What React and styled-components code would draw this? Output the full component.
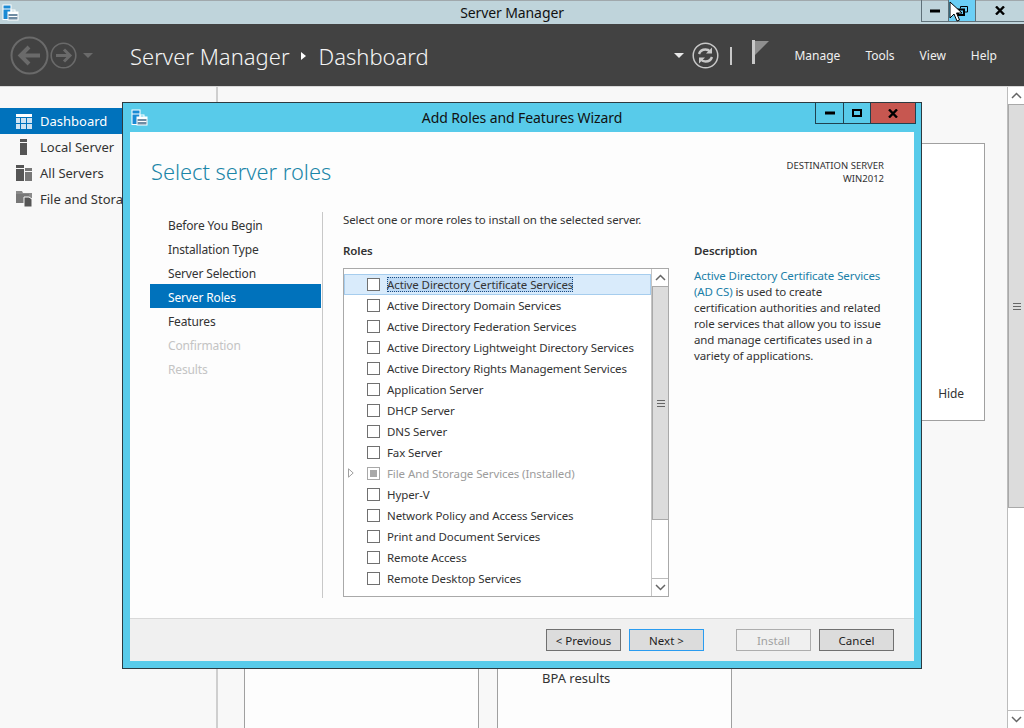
import React from 'react'
import styled, { createGlobalStyle } from 'styled-components'

const UI_FONT = `"Noto Sans", "Open Sans", "Liberation Sans", sans-serif`

const GlobalStyle = createGlobalStyle`
  html, body {
    margin: 0;
    padding: 0;
    height: 100%;
    overflow: hidden;
  }
  body {
    font-family: ${UI_FONT};
    font-size: 12px;
    color: #333;
  }
`

const ROLES = [
  { name: 'Active Directory Certificate Services', selected: true },
  { name: 'Active Directory Domain Services' },
  { name: 'Active Directory Federation Services' },
  { name: 'Active Directory Lightweight Directory Services' },
  { name: 'Active Directory Rights Management Services' },
  { name: 'Application Server' },
  { name: 'DHCP Server' },
  { name: 'DNS Server' },
  { name: 'Fax Server' },
  { name: 'File And Storage Services (Installed)', installed: true },
  { name: 'Hyper-V' },
  { name: 'Network Policy and Access Services' },
  { name: 'Print and Document Services' },
  { name: 'Remote Access' },
  { name: 'Remote Desktop Services' },
]

const STEPS = [
  { name: 'Before You Begin' },
  { name: 'Installation Type' },
  { name: 'Server Selection' },
  { name: 'Server Roles', active: true },
  { name: 'Features' },
  { name: 'Confirmation', disabled: true },
  { name: 'Results', disabled: true },
]

const ServerManagerIcon = () => (
  <svg width="17" height="17" viewBox="0 0 17 17">
    <rect x="0.5" y="0.5" width="9" height="15.5" fill="#fff" />
    <rect x="1.5" y="1.5" width="7" height="3" fill="#1a8ad4" />
    <rect x="1.5" y="5.5" width="7" height="9.5" fill="#1a8ad4" />
    <rect x="5.5" y="7.5" width="11" height="9" fill="#fff" />
    <rect x="6.5" y="10" width="9" height="5.5" fill="#6f8ca3" />
    <rect x="6.5" y="12" width="9" height="1" fill="#fff" />
    <rect x="9" y="6" width="4" height="2.5" fill="none" stroke="#fff" strokeWidth="1" />
  </svg>
)

const DashboardIcon = () => (
  <svg width="16" height="15" viewBox="0 0 16 15">
    <rect x="0" y="0" width="16" height="3" fill="#fff" />
    <rect x="0" y="4" width="4" height="5" fill="#cfe3f2" />
    <rect x="5" y="4" width="5" height="5" fill="#cfe3f2" />
    <rect x="11" y="4" width="5" height="5" fill="#cfe3f2" />
    <rect x="0" y="10" width="4" height="5" fill="#cfe3f2" />
    <rect x="5" y="10" width="5" height="5" fill="#cfe3f2" />
    <rect x="11" y="10" width="5" height="5" fill="#cfe3f2" />
  </svg>
)

const LocalServerIcon = () => (
  <svg width="16" height="16" viewBox="0 0 16 16">
    <rect x="4" y="0" width="7" height="3" fill="#555" />
    <rect x="4" y="4" width="7" height="12" fill="#555" />
  </svg>
)

const AllServersIcon = () => (
  <svg width="16" height="16" viewBox="0 0 16 16">
    <rect x="0" y="0" width="8" height="3" fill="#555" />
    <rect x="0" y="4" width="8" height="12" fill="#555" />
    <rect x="9" y="3" width="7" height="3" fill="#777" />
    <rect x="9" y="7" width="7" height="9" fill="#777" />
  </svg>
)

const FileStorageIcon = () => (
  <svg width="16" height="16" viewBox="0 0 16 16">
    <path d="M0 0h6l1 2h9v5H0z" fill="#8a8a8a" />
    <rect x="0" y="3" width="13" height="9" fill="#777" />
    <path d="M8 6h5l3 2v8H8z" fill="#555" stroke="#f8f8f8" strokeWidth="1" />
  </svg>
)

const BackIcon = () => (
  <svg width="39" height="39" viewBox="0 0 39 39">
    <circle cx="19.5" cy="19.5" r="18" fill="none" stroke="#6a6a6a" strokeWidth="2" />
    <path d="M30 19.5H11M19 11l-8.5 8.5L19 28" fill="none" stroke="#6a6a6a" strokeWidth="4" />
  </svg>
)

const ForwardIcon = () => (
  <svg width="27" height="27" viewBox="0 0 27 27">
    <circle cx="13.5" cy="13.5" r="12.3" fill="none" stroke="#6a6a6a" strokeWidth="1.6" />
    <path d="M6 13.5h14M14 7.5l6 6-6 6" fill="none" stroke="#6a6a6a" strokeWidth="3" />
  </svg>
)

const RefreshIcon = () => (
  <svg width="27" height="27" viewBox="0 0 27 27">
    <circle cx="13.5" cy="13.5" r="12.3" fill="none" stroke="#c8c8c8" strokeWidth="1.5" />
    <path d="M7 12c1-3 3.5-4.5 6.5-4.5 2 0 3.5.8 4.5 2" fill="none" stroke="#c8c8c8" strokeWidth="2.4" />
    <path d="M20 5.500v6h-6z" fill="#c8c8c8" />
    <path d="M20 15c-1 3-3.5 4.500-6.500 4.500-2 0-3.500-.8-4.500-2" fill="none" stroke="#c8c8c8" strokeWidth="2.4" />
    <path d="M7 21.500v-6h6z" fill="#c8c8c8" />
  </svg>
)

const FlagIcon = () => (
  <svg width="17" height="24" viewBox="0 0 17 24">
    <rect x="0" y="0" width="3" height="24" fill="#c8c8c8" />
    <path d="M3 1h14L3 15z" fill="#8f8f8f" />
  </svg>
)

const Chevron = ({ up }) => (
  <svg width="11" height="7" viewBox="0 0 11 7">
    <path d={up ? 'M1 6l4.500-4.500L10 6' : 'M1 1l4.500 4.500L10 1'} fill="none" stroke="#666" strokeWidth="1.5" />
  </svg>
)

const MinIcon = () => (
  <svg width="10" height="4" viewBox="0 0 10 4"><rect y="0.5" width="10" height="3" fill="#000" /></svg>
)

const MaxIcon = () => (
  <svg width="10" height="8" viewBox="0 0 10 8"><rect x="1" y="1" width="8" height="6" fill="none" stroke="#000" strokeWidth="2" /></svg>
)

const RestoreIcon = () => (
  <svg width="11" height="10" viewBox="0 0 11 10">
    <path d="M3.500 2.500V.5h7v5.500H8" fill="none" stroke="#000" strokeWidth="1" />
    <rect x="1" y="3.500" width="6" height="5.500" fill="none" stroke="#000" strokeWidth="2" />
  </svg>
)

const CloseIcon = () => (
  <svg width="10" height="9" viewBox="0 0 10 9">
    <path d="M1 .5l8 8M9 .5l-8 8" fill="none" stroke="#000" strokeWidth="2.400" />
  </svg>
)

const CursorIcon = () => (
  <svg width="14" height="22" viewBox="0 0 14 22">
    <path d="M1 1v16l4-4 3 7 2.500-1-3-7h5.500z" fill="#fff" stroke="#000" strokeWidth="1" />
  </svg>
)

const ExpanderIcon = () => (
  <svg width="6" height="10" viewBox="0 0 6 10">
    <path d="M.5.8L5.200 5 .5 9.200z" fill="#fff" stroke="#a0a0a0" strokeWidth="1" />
  </svg>
)

const Page = styled.div`
  width: 1024px;
  height: 728px;
  position: relative;
  overflow: hidden;
  background: #f8f8f8;
  display: flex;
  flex-direction: column;
`

const TitleBar = styled.div`
  height: 23px;
  flex: none;
  position: relative;
  box-sizing: content-box;
  background: #bfd4db;
  border-top: 1px solid #a0a8ac;
  display: flex;
  align-items: center;
  justify-content: center;
  font-size: 14px;
  letter-spacing: -0.1px;
  line-height: 21px;
  color: #111;
`

const TitleIcon = styled.span`
  position: absolute;
  left: 2px;
  top: 3px;
  display: flex;
`

const MainControls = styled.div`
  position: absolute;
  right: 0;
  top: -1px;
  height: 21px;
  display: flex;
  border-bottom: 1px solid #5f7078;
  border-left: 1px solid #5f7078;
`

const MainControl = styled.div`
  width: ${p => p.$w}px;
  display: flex;
  align-items: center;
  justify-content: center;
  background: ${p => (p.$hover ? '#6bcff6' : 'transparent')};
  border-left: ${p => (p.$first ? 'none' : '1px solid #5f7078')};
`

const Header = styled.header`
  height: 63px;
  flex: none;
  background: #424242;
  border-bottom: 1px solid #d8d8d8;
  box-sizing: border-box;
  display: flex;
  align-items: center;
  padding: 1px 27px 0 10px;
  color: #fff;
`

const NavButtons = styled.div`
  display: flex;
  align-items: center;
  gap: 1px;
  width: 120px;
`

const Caret = styled.span`
  width: 0;
  height: 0;
  border-left: 5px solid transparent;
  border-right: 5px solid transparent;
  border-top: 5px solid ${p => p.$color};
  margin-left: ${p => p.$left || 0}px;
  margin-right: ${p => p.$right || 0}px;
`

const Breadcrumb = styled.div`
  display: flex;
  align-items: center;
  font-size: 22px;
  font-weight: 300;
  flex: 1;
  color: #f4f4f4;
`

const CrumbArrow = styled.span`
  width: 0;
  height: 0;
  border-top: 4px solid transparent;
  border-bottom: 4px solid transparent;
  border-left: 5px solid #fff;
  margin: 0 13px 0 11px;
`

const HeaderTools = styled.div`
  display: flex;
  align-items: center;
`

const Pipe = styled.span`
  width: 2px;
  height: 18px;
  background: #c8c8c8;
  margin: 0 20px 0 11px;
`

const FlagWrap = styled.span`
  display: flex;
  margin: -8px 25px 0 0;
`

const Menu = styled.nav`
  display: flex;
  gap: 25px;
  font-size: 12px;
  color: #f0f0f0;
`

const Body = styled.div`
  flex: 1;
  display: flex;
  min-height: 0;
`

const SideNav = styled.aside`
  width: 216px;
  flex: none;
  box-sizing: content-box;
  border-right: 2px solid #cfcfcf;
  padding-top: 21px;
`

const NavItem = styled.div`
  height: 26px;
  display: flex;
  align-items: center;
  gap: 8px;
  padding-left: 16px;
  font-size: 13px;
  white-space: nowrap;
  background: ${p => (p.$active ? '#0072bc' : 'transparent')};
  color: ${p => (p.$active ? '#fff' : '#333')};
`

const Content = styled.main`
  flex: 1;
  min-width: 0;
  box-sizing: border-box;
  padding: 56px 22px 0 26px;
  overflow: hidden;
`

const WelcomeCard = styled.section`
  height: 278px;
  box-sizing: border-box;
  background: #fff;
  border: 1px solid #a0a0a0;
  display: flex;
  align-items: flex-end;
  justify-content: flex-end;
  padding: 0 20px 18px 0;
  font-size: 12px;
  letter-spacing: -0.1px;
  color: #333;
`

const TileRow = styled.div`
  display: flex;
  gap: 18px;
  margin-top: 30px;
`

const Tile = styled.section`
  width: 235px;
  height: 320px;
  box-sizing: border-box;
  background: #fdfdfd;
  border: 1px solid #a0a0a0;
  padding: 217px 0 0 44px;
  font-size: 13px;
  color: #333;
`

const PageScroll = styled.div`
  width: 17px;
  flex: none;
  box-sizing: border-box;
  background: #fff;
  border-left: 1px solid #bcbcbc;
  display: flex;
  flex-direction: column;
`

const ScrollBtn = styled.div`
  height: ${p => p.$h}px;
  flex: none;
  background: #fff;
  display: flex;
  align-items: center;
  justify-content: center;
  border-top: ${p => (p.$down ? '1px solid #bcbcbc' : 'none')};
`

const ScrollThumb = styled.div`
  height: ${p => p.$h}px;
  flex: none;
  box-sizing: border-box;
  background: #dcdcdc;
  border: 1px solid #a9a9a9;
  border-right: none;
  display: flex;
  align-items: center;
  justify-content: center;
`

const ScrollFill = styled.div`
  flex: 1;
  background: #fff;
`

const Grip = styled.span`
  width: 8px;
  height: 7px;
  background: repeating-linear-gradient(to bottom, #666 0 1px, transparent 1px 3px);
`

const Wizard = styled.div`
  position: absolute;
  left: 122px;
  top: 102px;
  width: 800px;
  height: 567px;
  box-sizing: border-box;
  background: #58cbea;
  border: 1px solid #2c3a40;
  padding: 0 7px 7px;
  display: flex;
  flex-direction: column;
`

const WizardTitle = styled.div`
  height: 29px;
  flex: none;
  position: relative;
  display: flex;
  align-items: center;
  justify-content: center;
  font-size: 14px;
  letter-spacing: -0.1px;
  color: #111;
  box-sizing: border-box;
`

const WizardIcon = styled.span`
  position: absolute;
  left: 1px;
  top: 6px;
  display: flex;
`

const WizardControls = styled.div`
  position: absolute;
  right: -2px;
  top: 0;
  height: 20px;
  display: flex;
  border: 1px solid #1f4250;
  border-top: none;
`

const WizardControl = styled.div`
  width: ${p => p.$w}px;
  box-sizing: border-box;
  display: flex;
  align-items: center;
  justify-content: center;
  background: ${p => (p.$close ? '#c75750' : 'transparent')};
  border-left: ${p => (p.$first ? 'none' : '1px solid #1f4250')};
`

const WizardBody = styled.div`
  flex: 1;
  min-height: 0;
  background: #fdfdfd;
  display: flex;
  flex-direction: column;
`

const HeadingRow = styled.div`
  height: 80px;
  flex: none;
  box-sizing: border-box;
  display: flex;
  justify-content: space-between;
  padding: 24px 30px 0 21px;
`

const Heading = styled.h1`
  margin: 0;
  font-size: 21.8px;
  font-weight: 300;
  line-height: 32px;
  color: #1b86a8;
`

const Destination = styled.div`
  text-align: right;
  font-size: 9.5px;
  line-height: 13px;
  padding-top: 3px;
  color: #333;
`

const Panels = styled.div`
  flex: 1;
  min-height: 0;
  display: flex;
  padding-left: 20px;
`

const Steps = styled.div`
  width: 171px;
  flex: none;
  height: 386px;
`

const Step = styled.div`
  height: 24px;
  box-sizing: border-box;
  display: flex;
  align-items: center;
  padding: 3px 0 0 18px;
  font-size: 12px;
  letter-spacing: -0.15px;
  background: ${p => (p.$active ? '#0072bc' : 'transparent')};
  color: ${p => (p.$active ? '#fff' : p.$disabled ? '#c4c4c4' : '#333')};
`

const RolesPane = styled.div`
  margin-left: 1px;
  height: 386px;
  border-left: 1px solid #c8c8c8;
  padding-left: 20px;
  display: flex;
  flex-direction: column;
`

const Intro = styled.div`
  height: 14px;
  line-height: 16px;
  font-size: 11.5px;
  letter-spacing: -0.1px;
`

const Columns = styled.div`
  display: flex;
  gap: 25px;
  margin-top: 16px;
`

const RolesColumn = styled.div`
  width: 326px;
`

const ColumnTitle = styled.div`
  height: 17px;
  line-height: 17px;
  font-size: 11.5px;
  font-weight: 600;
  letter-spacing: -0.1px;
  margin-bottom: 9px;
`

const RoleList = styled.div`
  height: 329px;
  box-sizing: border-box;
  border: 1px solid #a9a9a9;
  background: #fff;
  display: flex;
`

const RoleRows = styled.div`
  flex: 1;
  padding-top: 5px;
`

const RoleRow = styled.div`
  height: 21px;
  box-sizing: border-box;
  display: flex;
  align-items: center;
  padding-left: 22px;
  position: relative;
  font-size: 11.5px;
  letter-spacing: -0.1px;
  color: ${p => (p.$installed ? '#9c9c9c' : '#333')};
  background: ${p => (p.$selected ? '#d9ebfb' : 'transparent')};
  border: 1px solid ${p => (p.$selected ? '#a6cdee' : 'transparent')};
`

const Expander = styled.span`
  position: absolute;
  left: 3px;
  top: 4px;
  display: flex;
`

const CheckBox = styled.span`
  width: 13px;
  height: 13px;
  flex: none;
  box-sizing: border-box;
  border: 1px solid ${p => (p.$installed ? '#a8a8a8' : '#707070')};
  background: #fff;
  display: flex;
  align-items: center;
  justify-content: center;
  margin-right: 7px;

  &::after {
    content: '';
    display: ${p => (p.$installed ? 'block' : 'none')};
    width: 7px;
    height: 7px;
    background: #a8a8a8;
  }
`

const RoleName = styled.span`
  white-space: nowrap;
  background: ${p => (p.$selected ? '#bcd9f5' : 'transparent')};
  outline: ${p => (p.$selected ? '1px dotted #1a4a80' : 'none')};
  outline-offset: -1px;
`

const ListScroll = styled.div`
  width: 17px;
  flex: none;
  display: flex;
  flex-direction: column;
  border-left: 1px solid #c4c4c4;
  box-sizing: border-box;
`

const DescColumn = styled.div`
  width: 192px;
`

const DescText = styled.p`
  margin: 9px 0 0;
  font-size: 11.5px;
  letter-spacing: -0.1px;
  line-height: 16px;
  color: #333;
`

const DescLink = styled.span`
  color: #1b7fa8;
`

const Footer = styled.footer`
  height: 43px;
  flex: none;
  box-sizing: border-box;
  background: #f0f0f0;
  border-top: 1px solid #d9d9d9;
  display: flex;
  align-items: flex-start;
  padding: 10px 20px 0 0;
  justify-content: flex-end;
`

const Button = styled.button`
  width: 75px;
  height: 22px;
  box-sizing: border-box;
  padding: 0;
  margin-left: ${p => p.$gap || 0}px;
  font-family: inherit;
  font-size: 11.5px;
  border: 1px solid ${p => (p.$focus ? '#2a9cf0' : p.disabled ? '#adadad' : '#707070')};
  background: ${p => (p.disabled ? '#f0f0f0' : '#dcdcdc')};
  color: ${p => (p.disabled ? '#a0a0a0' : '#222')};
`

const Pointer = styled.span`
  position: absolute;
  left: 949px;
  top: 1px;
  display: flex;
`

export default function App() {
  return (
    <Page>
      <GlobalStyle />
      <TitleBar>
        <TitleIcon><ServerManagerIcon /></TitleIcon>
        Server Manager
        <MainControls>
          <MainControl $w={26} $first><MinIcon /></MainControl>
          <MainControl $w={26} $hover><RestoreIcon /></MainControl>
          <MainControl $w={48}><CloseIcon /></MainControl>
        </MainControls>
      </TitleBar>

      <Header>
        <NavButtons>
          <BackIcon />
          <ForwardIcon />
          <Caret $color="#6a6a6a" $left={5} />
        </NavButtons>
        <Breadcrumb>
          Server Manager<CrumbArrow />Dashboard
        </Breadcrumb>
        <HeaderTools>
          <Caret $color="#e8e8e8" $right={8} />
          <RefreshIcon />
          <Pipe />
          <FlagWrap><FlagIcon /></FlagWrap>
          <Menu>
            <span>Manage</span>
            <span>Tools</span>
            <span>View</span>
            <span>Help</span>
          </Menu>
        </HeaderTools>
      </Header>

      <Body>
        <SideNav>
          <NavItem $active><DashboardIcon />Dashboard</NavItem>
          <NavItem><LocalServerIcon />Local Server</NavItem>
          <NavItem><AllServersIcon />All Servers</NavItem>
          <NavItem><FileStorageIcon />File and Storage Services</NavItem>
        </SideNav>
        <Content>
          <WelcomeCard>Hide</WelcomeCard>
          <TileRow>
            <Tile />
            <Tile>BPA results</Tile>
          </TileRow>
        </Content>
        <PageScroll>
          <ScrollBtn $h={17}><Chevron up /></ScrollBtn>
          <ScrollThumb $h={404}><Grip /></ScrollThumb>
          <ScrollFill />
          <ScrollBtn $h={17} $down><Chevron /></ScrollBtn>
        </PageScroll>
      </Body>

      <Wizard>
        <WizardTitle>
          <WizardIcon><ServerManagerIcon /></WizardIcon>
          Add Roles and Features Wizard
          <WizardControls>
            <WizardControl $w={27} $first><MinIcon /></WizardControl>
            <WizardControl $w={27}><MaxIcon /></WizardControl>
            <WizardControl $w={45} $close><CloseIcon /></WizardControl>
          </WizardControls>
        </WizardTitle>
        <WizardBody>
          <HeadingRow>
            <Heading>Select server roles</Heading>
            <Destination>DESTINATION SERVER<br />WIN2012</Destination>
          </HeadingRow>
          <Panels>
            <Steps>
              {STEPS.map(s => (
                <Step key={s.name} $active={s.active} $disabled={s.disabled}>{s.name}</Step>
              ))}
            </Steps>
            <RolesPane>
              <Intro>Select one or more roles to install on the selected server.</Intro>
              <Columns>
                <RolesColumn>
                  <ColumnTitle>Roles</ColumnTitle>
                  <RoleList>
                    <RoleRows>
                      {ROLES.map(r => (
                        <RoleRow key={r.name} $selected={r.selected} $installed={r.installed}>
                          {r.installed && <Expander><ExpanderIcon /></Expander>}
                          <CheckBox $installed={r.installed} />
                          <RoleName $selected={r.selected}>{r.name}</RoleName>
                        </RoleRow>
                      ))}
                    </RoleRows>
                    <ListScroll>
                      <ScrollBtn $h={17}><Chevron up /></ScrollBtn>
                      <ScrollThumb $h={234}><Grip /></ScrollThumb>
                      <ScrollFill />
                      <ScrollBtn $h={17} $down><Chevron /></ScrollBtn>
                    </ListScroll>
                  </RoleList>
                </RolesColumn>
                <DescColumn>
                  <ColumnTitle>Description</ColumnTitle>
                  <DescText>
                    <DescLink>Active Directory Certificate Services (AD CS)</DescLink> is used to create certification authorities and related role services that allow you to issue and manage certificates used in a variety of applications.
                  </DescText>
                </DescColumn>
              </Columns>
            </RolesPane>
          </Panels>
          <Footer>
            <Button>&lt; Previous</Button>
            <Button $gap={8} $focus>Next &gt;</Button>
            <Button $gap={32} disabled>Install</Button>
            <Button $gap={8}>Cancel</Button>
          </Footer>
        </WizardBody>
      </Wizard>

      <Pointer><CursorIcon /></Pointer>
    </Page>
  )
}
